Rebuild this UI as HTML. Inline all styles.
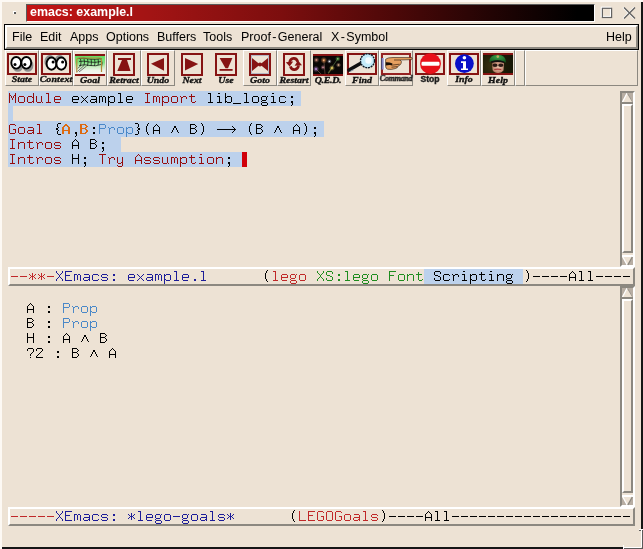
<!DOCTYPE html>
<html><head><meta charset="utf-8">
<style>
html,body{margin:0;padding:0;}
body{width:643px;height:549px;overflow:hidden;position:relative;background:#ede2d4;font-family:"Liberation Sans",sans-serif;}
.a{position:absolute;box-sizing:border-box;}
.t{position:absolute;white-space:pre;will-change:transform;}
.mono{will-change:transform;-webkit-text-stroke:0.2px #ede2d4;font-family:"Liberation Mono",monospace;font-size:15px;line-height:15px;white-space:pre;position:absolute;}
.menu{will-change:transform;position:absolute;font-size:12.5px;color:#000;top:30px;line-height:15px;white-space:pre;}
.lbl{will-change:transform;position:absolute;-webkit-text-stroke:0.35px #111;font-family:"Liberation Serif",serif;font-weight:bold;font-style:italic;font-size:9px;line-height:12px;white-space:nowrap;color:#111;text-align:center;transform:scaleX(1.1);}
.kw{color:#960c0c;}
.hl{background:#bcd1ec;-webkit-text-stroke-color:#bcd1ec;}
svg{position:absolute;overflow:visible;}
</style></head><body>
<div class="a" style="left:0px;top:0px;width:643px;height:2px;background:#fdf9f4"></div>
<div class="a" style="left:0px;top:0px;width:2px;height:549px;background:#fdf9f4"></div>
<div class="a" style="left:641px;top:2px;width:2px;height:527px;background:#151515"></div>
<div class="a" style="left:2px;top:547px;width:621px;height:2px;background:#151515"></div>
<div class="a" style="left:639px;top:529px;width:4px;height:1px;background:#fff"></div>
<div class="a" style="left:639px;top:530px;width:2px;height:1px;background:#5a5a5a"></div>
<div class="a" style="left:641px;top:530px;width:1px;height:17px;background:#fff"></div>
<div class="a" style="left:642px;top:530px;width:1px;height:19px;background:#5a5a5a"></div>
<div class="a" style="left:624px;top:547px;width:17px;height:1px;background:#fff"></div>
<div class="a" style="left:624px;top:548px;width:18px;height:1px;background:#5a5a5a"></div>
<div class="a" style="left:623px;top:545px;width:1px;height:4px;background:#fff"></div>
<div class="a" style="left:13px;top:11px;width:3px;height:3px;border-top:1px solid #fff;border-left:1px solid #fff;background:#5a5a5a"></div>
<div class="a" style="left:26px;top:4px;width:569px;height:18px;border-top:1px solid #5a5a5a;border-left:1px solid #5a5a5a;border-right:1px solid #fff;border-bottom:1px solid #fff;background:linear-gradient(to right,#c41414 0%,#a21414 22%,#7c0e0e 45%,#4c0808 65%,#220404 82%,#000 97%)"></div>
<div class="t" style="left:30px;top:4.3px;font-weight:bold;font-size:12.45px;line-height:17px;color:#fff;">emacs: example.l</div>
<svg style="left:598px;top:4px" width="44" height="18"><rect x="3.4" y="3.3" width="9.2" height="9.2" fill="none" stroke="#fff" stroke-width="1.3"/><rect x="4.4" y="4.3" width="9.2" height="9.2" fill="none" stroke="#626262" stroke-width="1.2"/><path d="M25 3.5 L36 14.5 M36 3.5 L25 14.5" stroke="#fff" stroke-width="1.4"/><path d="M26 3.5 L37 14.5 M37 3.5 L26 14.5" stroke="#626262" stroke-width="1.4"/></svg>
<div class="a" style="left:4px;top:24px;width:635px;height:26px;border:1px solid #000"></div>
<div class="a" style="left:5px;top:25px;width:633px;height:24px;border-top:2px solid #fff;border-left:2px solid #fff;border-right:2px solid #8c8880;border-bottom:2px solid #8c8880"></div>
<div class="menu" style="left:12px">File</div>
<div class="menu" style="left:40px">Edit</div>
<div class="menu" style="left:70px">Apps</div>
<div class="menu" style="left:106px">Options</div>
<div class="menu" style="left:157px">Buffers</div>
<div class="menu" style="left:203px">Tools</div>
<div class="menu" style="left:241px">Proof<span style="margin:0 1.4px">-</span>General</div>
<div class="menu" style="left:331px">X<span style="margin:0 1.4px">-</span>Symbol</div>
<div class="menu" style="left:606px">Help</div>
<div class="a" style="left:5px;top:50px;width:34px;height:36px;border-top:1px solid #fff;border-left:1px solid #fff;border-right:1px solid #8c8880;border-bottom:1px solid #8c8880"></div>
<div class="a" style="left:39px;top:50px;width:34px;height:36px;border-top:1px solid #fff;border-left:1px solid #fff;border-right:1px solid #8c8880;border-bottom:1px solid #8c8880"></div>
<div class="a" style="left:73px;top:50px;width:34px;height:36px;border-top:1px solid #fff;border-left:1px solid #fff;border-right:1px solid #8c8880;border-bottom:1px solid #8c8880"></div>
<div class="a" style="left:107px;top:50px;width:34px;height:36px;border-top:1px solid #fff;border-left:1px solid #fff;border-right:1px solid #8c8880;border-bottom:1px solid #8c8880"></div>
<div class="a" style="left:141px;top:50px;width:34px;height:36px;border-top:1px solid #fff;border-left:1px solid #fff;border-right:1px solid #8c8880;border-bottom:1px solid #8c8880"></div>
<div class="a" style="left:243px;top:50px;width:34px;height:36px;border-top:1px solid #fff;border-left:1px solid #fff;border-right:1px solid #8c8880;border-bottom:1px solid #8c8880"></div>
<div class="a" style="left:277px;top:50px;width:34px;height:36px;border-top:1px solid #fff;border-left:1px solid #fff;border-right:1px solid #8c8880;border-bottom:1px solid #8c8880"></div>
<div class="a" style="left:345px;top:50px;width:34px;height:36px;border-top:1px solid #fff;border-left:1px solid #fff;border-right:1px solid #8c8880;border-bottom:1px solid #8c8880"></div>
<div class="a" style="left:379px;top:50px;width:34px;height:36px;border-top:1px solid #fff;border-left:1px solid #fff;border-right:1px solid #8c8880;border-bottom:1px solid #8c8880"></div>
<div class="a" style="left:447px;top:50px;width:34px;height:36px;border-top:1px solid #fff;border-left:1px solid #fff;border-right:1px solid #8c8880;border-bottom:1px solid #8c8880"></div>
<div class="a" style="left:481px;top:50px;width:34px;height:36px;border-top:1px solid #fff;border-left:1px solid #fff;border-right:1px solid #8c8880;border-bottom:1px solid #8c8880"></div>
<div class="a" style="left:515px;top:50px;width:10px;height:36px;border-top:1px solid #fff;border-left:1px solid #fff;border-right:1px solid #8c8880;border-bottom:1px solid #8c8880"></div>
<div class="a" style="left:525px;top:50px;width:113px;height:36px;border-top:1px solid #fff;border-left:1px solid #fff;border-right:1px solid #8c8880;border-bottom:1px solid #8c8880"></div>
<div class="a" style="left:7px;top:53px;width:30px;height:22px;border:2px solid #861313"></div>
<svg style="left:7px;top:53px" width="30" height="22"><ellipse cx="10.799999999999999" cy="12.4" rx="5.5" ry="6.3999999999999995" fill="#8c8c8c"/><ellipse cx="20.900000000000002" cy="12.4" rx="5.5" ry="6.3999999999999995" fill="#8c8c8c"/><ellipse cx="9.2" cy="9.8" rx="4.9" ry="5.8" fill="#fff" stroke="#000" stroke-width="1.9"/><ellipse cx="19.3" cy="9.8" rx="4.9" ry="5.8" fill="#fff" stroke="#000" stroke-width="1.9"/><circle cx="8" cy="11.6" r="1.5" fill="#000"/><circle cx="17.9" cy="11.6" r="1.5" fill="#000"/></svg>
<div class="lbl" style="left:-8px;width:60px;top:72.6px;">State</div>
<div class="a" style="left:41px;top:53px;width:30px;height:22px;border:2px solid #861313"></div>
<svg style="left:41px;top:53px" width="30" height="22"><ellipse cx="8.9" cy="8.7" rx="5.5" ry="6.699999999999999" fill="#8c8c8c"/><ellipse cx="18.7" cy="8.7" rx="5.5" ry="6.699999999999999" fill="#8c8c8c"/><ellipse cx="10.5" cy="10.6" rx="4.9" ry="6.1" fill="#fff" stroke="#000" stroke-width="1.9"/><ellipse cx="20.3" cy="10.6" rx="4.9" ry="6.1" fill="#fff" stroke="#000" stroke-width="1.9"/><circle cx="12.1" cy="9" r="1.5" fill="#000"/><circle cx="21.6" cy="9" r="1.5" fill="#000"/></svg>
<div class="lbl" style="left:26px;width:60px;top:72.6px;letter-spacing:0.1px">Context</div>
<div class="a" style="left:75px;top:54px;width:30px;height:2px;background:#861313"></div>
<div class="a" style="left:75px;top:56px;width:30px;height:18px;background:linear-gradient(to bottom,#64dc64 0%,#7ee27e 35%,#c8eec0 60%,#eef4ea 80%,#f4f6f2 100%)"></div>
<div class="a" style="left:75px;top:74px;width:30px;height:2px;background:#861313"></div>
<svg style="left:75px;top:54px" width="30" height="22"><path d="M3.5 4.5 Q9 3.5 14 5 Q20 6 26.5 4.5 M4 7.5 Q9 6.5 14 8 Q20 9 26 7.5 M4 11.5 Q10 10 15 11.5 Q21 12.5 26 10.5 M5.5 5 Q6.5 8 5.5 12 M9 4.5 Q10 8 9 11.5 M12.5 5 Q13.5 8 12.5 12 M16 5 Q17 8 16 12 M19.5 5.5 Q20.5 8 19.5 12 M23 5 Q24 8 23 11 M26 5 Q28 9 26.5 13" stroke="#161616" stroke-width="0.75" fill="none"/><path d="M2.5 17.5 L9 11.5 M2.5 14.5 L6 11.5 M4 18 L11.5 12" stroke="#202020" stroke-width="0.6" fill="none"/><path d="M1.8 18.5 L1.8 5.5 Q2.2 4 4 4 L25 4 Q26.5 4 26.5 6 L26.5 18" stroke="#b48a38" stroke-width="1.2" fill="none"/></svg>
<div class="lbl" style="left:60px;width:60px;top:73.6px;">Goal</div>
<div class="a" style="left:113px;top:53px;width:22px;height:23px;border:2px solid #861313"></div>
<svg style="left:113px;top:53px" width="22" height="23"><rect x="5" y="5" width="13" height="2" fill="#861313"/><path d="M9 7 L14 7 L17.5 18 L4.3 18 Z" fill="#861313"/></svg>
<div class="lbl" style="left:94px;width:60px;top:73.6px;">Retract</div>
<div class="a" style="left:147px;top:53px;width:22px;height:23px;border:2px solid #861313"></div>
<svg style="left:147px;top:53px" width="22" height="23"><path d="M4 10.8 L17 4.9 L17 17.8 Z" fill="#861313"/></svg>
<div class="lbl" style="left:128px;width:60px;top:73.6px;">Undo</div>
<div class="a" style="left:181px;top:53px;width:22px;height:23px;border:2px solid #861313"></div>
<svg style="left:181px;top:53px" width="22" height="23"><path d="M4 4.9 L4 17.5 L17.2 11 Z" fill="#861313"/></svg>
<div class="lbl" style="left:162px;width:60px;top:73.6px;">Next</div>
<div class="a" style="left:215px;top:53px;width:22px;height:23px;border:2px solid #861313"></div>
<svg style="left:215px;top:53px" width="22" height="23"><path d="M4.6 4.9 L17.4 4.9 L13 15.2 L10.5 15.2 Z" fill="#861313"/><rect x="4.6" y="16" width="13" height="1.8" fill="#861313"/></svg>
<div class="lbl" style="left:196px;width:60px;top:73.6px;">Use</div>
<div class="a" style="left:249px;top:53px;width:22px;height:23px;border:2px solid #861313"></div>
<svg style="left:249px;top:53px" width="22" height="23"><rect x="2.5" y="2.5" width="17" height="18" fill="none" stroke="#b4b8c4" stroke-width="1"/><path d="M3 5 L11 11.5 L3 18 Z M19 5 L11 11.5 L19 18 Z" fill="#861313"/><circle cx="11" cy="11.4" r="2" fill="#861313"/></svg>
<div class="lbl" style="left:230px;width:60px;top:73.6px;">Goto</div>
<div class="a" style="left:283px;top:53px;width:22px;height:23px;border:2px solid #861313"></div>
<svg style="left:283px;top:53px" width="22" height="23"><path d="M14.8 8.8 A4.3 5.4 0 0 0 6.6 9.5" stroke="#861313" stroke-width="2.7" fill="none"/><path d="M7.4 13.3 A4.3 5.4 0 0 0 15.6 12.4" stroke="#861313" stroke-width="2.7" fill="none"/><path d="M2.8 9.2 L10.2 8.4 L6.6 13.6 Z M11.6 12.8 L19 12.2 L15 7.6 Z" fill="#861313"/></svg>
<div class="lbl" style="left:264px;width:60px;top:73.6px;">Restart</div>
<div class="a" style="left:313px;top:54px;width:30px;height:2px;background:#861313"></div>
<div class="a" style="left:313px;top:56px;width:30px;height:18px;background:#0a0706"></div>
<div class="a" style="left:313px;top:74px;width:30px;height:2px;background:#861313"></div>
<svg style="left:313px;top:54px" width="30" height="22"><defs><radialGradient id="glc08070"><stop offset="0" stop-color="#fff" stop-opacity="1"/><stop offset="0.18" stop-color="#c08070" stop-opacity="0.95"/><stop offset="0.45" stop-color="#c08070" stop-opacity="0.45"/><stop offset="1" stop-color="#c08070" stop-opacity="0"/></radialGradient><radialGradient id="gle89050"><stop offset="0" stop-color="#fff" stop-opacity="1"/><stop offset="0.18" stop-color="#e89050" stop-opacity="0.95"/><stop offset="0.45" stop-color="#e89050" stop-opacity="0.45"/><stop offset="1" stop-color="#e89050" stop-opacity="0"/></radialGradient><radialGradient id="glc8c8d8"><stop offset="0" stop-color="#fff" stop-opacity="1"/><stop offset="0.18" stop-color="#c8c8d8" stop-opacity="0.95"/><stop offset="0.45" stop-color="#c8c8d8" stop-opacity="0.45"/><stop offset="1" stop-color="#c8c8d8" stop-opacity="0"/></radialGradient><radialGradient id="gl60b050"><stop offset="0" stop-color="#fff" stop-opacity="1"/><stop offset="0.18" stop-color="#60b050" stop-opacity="0.95"/><stop offset="0.45" stop-color="#60b050" stop-opacity="0.45"/><stop offset="1" stop-color="#60b050" stop-opacity="0"/></radialGradient><radialGradient id="glc8a080"><stop offset="0" stop-color="#fff" stop-opacity="1"/><stop offset="0.18" stop-color="#c8a080" stop-opacity="0.95"/><stop offset="0.45" stop-color="#c8a080" stop-opacity="0.45"/><stop offset="1" stop-color="#c8a080" stop-opacity="0"/></radialGradient><radialGradient id="glb080d0"><stop offset="0" stop-color="#fff" stop-opacity="1"/><stop offset="0.18" stop-color="#b080d0" stop-opacity="0.95"/><stop offset="0.45" stop-color="#b080d0" stop-opacity="0.45"/><stop offset="1" stop-color="#b080d0" stop-opacity="0"/></radialGradient><radialGradient id="glc08090"><stop offset="0" stop-color="#fff" stop-opacity="1"/><stop offset="0.18" stop-color="#c08090" stop-opacity="0.95"/><stop offset="0.45" stop-color="#c08090" stop-opacity="0.45"/><stop offset="1" stop-color="#c08090" stop-opacity="0"/></radialGradient><radialGradient id="gle8d060"><stop offset="0" stop-color="#fff" stop-opacity="1"/><stop offset="0.18" stop-color="#e8d060" stop-opacity="0.95"/><stop offset="0.45" stop-color="#e8d060" stop-opacity="0.45"/><stop offset="1" stop-color="#e8d060" stop-opacity="0"/></radialGradient></defs><path d="M10.8 6 L12 20 M3 15 L8 20" stroke="#806050" stroke-width="1" opacity="0.6"/><path d="M24.8 4.8 L15 19" stroke="#608050" stroke-width="1" opacity="0.6"/><path d="M19 14 L15.5 19.5" stroke="#d0c060" stroke-width="0.9" opacity="0.5"/><circle cx="3.4" cy="6" r="3" fill="url(#glc08070)"/><circle cx="10.8" cy="6.2" r="3.4" fill="url(#gle89050)"/><circle cx="16.4" cy="7.4" r="2.4" fill="url(#glc8c8d8)"/><circle cx="24.8" cy="4.8" r="2.8" fill="url(#gl60b050)"/><circle cx="25.5" cy="11" r="2.6" fill="url(#glc8a080)"/><circle cx="3" cy="15" r="3.2" fill="url(#glb080d0)"/><circle cx="10" cy="13.4" r="2.6" fill="url(#glc08090)"/><circle cx="19" cy="14" r="3" fill="url(#gle8d060)"/></svg>
<div class="lbl" style="left:298px;width:60px;top:73.6px;letter-spacing:-0.25px">Q.E.D.</div>
<div class="a" style="left:347px;top:53px;width:30px;height:22px;border:2px solid #861313"></div>
<svg style="left:347px;top:53px" width="30" height="22"><path d="M2 17 L12.5 11" stroke="#101010" stroke-width="3.6" stroke-linecap="round"/><path d="M3 18.5 L7 16.5" stroke="#8090a0" stroke-width="1" /><circle cx="20.5" cy="7.8" r="7" fill="#c4ecfa" stroke="#0e1a28" stroke-width="1.4" stroke-dasharray="2 0.8"/><circle cx="21.5" cy="7.5" r="3.2" fill="#f4fcff"/></svg>
<div class="lbl" style="left:332px;width:60px;top:73.6px;">Find</div>
<div class="a" style="left:381px;top:53px;width:30px;height:22px;border:2px solid #962222"></div>
<svg style="left:381px;top:53px" width="32" height="22"><rect x="0" y="5" width="2.8" height="11.5" fill="#8a88c6"/><path d="M0.4 5 V16.5" stroke="#30304a" stroke-width="0.8"/><rect x="2.8" y="5" width="1.8" height="11.5" fill="#f6f6f6"/><path d="M4.6 6.2 Q7 4.4 12 4.5 L30.8 4.6 Q31.6 5.6 30.6 6.6 L19 7 Q21.2 8.2 20.2 10.2 Q19.6 12.2 17.2 13 Q16.8 15 14.2 15.6 Q10 17 6.6 16.2 Q4.6 15.4 4.6 13.4 Z" fill="#e6a060" stroke="#2a1a10" stroke-width="0.6"/><path d="M4.8 9.2 Q8.5 9 11.5 10.6 L11 12.2 Q8 11.6 4.8 12.4 Z" fill="#1a1008"/><path d="M10.5 12.2 L18.5 11.2 M10.5 14.2 L16.5 13.6 M13 7 L19 7" stroke="#3a2010" stroke-width="0.7" fill="none"/></svg>
<div class="lbl" style="left:366px;width:60px;top:72.6px;transform:scaleX(0.95);font-size:8.4px;color:#2a2a2a;letter-spacing:-0.2px">Command</div>
<div class="a" style="left:415px;top:53px;width:30px;height:22px;border:2px solid #861313"></div>
<svg style="left:415px;top:53px" width="30" height="22"><circle cx="15.5" cy="10.7" r="10.4" fill="#e8101a"/><rect x="6.5" y="8.7" width="18" height="4" rx="1.2" fill="#fff"/></svg>
<div class="t" style="left:400px;width:60px;text-align:center;top:72.6px;font-family:Liberation Sans,sans-serif;font-weight:bold;font-size:8.6px;line-height:12px;color:#1e1e1e;-webkit-text-stroke:0.45px #1e1e1e">Stop</div>
<div class="a" style="left:449px;top:53px;width:30px;height:22px;border:2px solid #861313"></div>
<svg style="left:449px;top:53px" width="30" height="22"><circle cx="15.4" cy="10.6" r="9.4" fill="#0a10c8"/><circle cx="15.4" cy="4.8" r="1.8" fill="#fff"/><path d="M12 8.3 L17 8.3 L17 15.5 L19 15.5 L19 17 L12 17 L12 15.5 L14 15.5 L14 10 L12 10 Z" fill="#fff"/></svg>
<div class="lbl" style="left:434px;width:60px;top:72.6px;">Info</div>
<div class="a" style="left:483px;top:53px;width:30px;height:2px;background:#861313"></div>
<div class="a" style="left:483px;top:55px;width:30px;height:18px;background:radial-gradient(circle at 30% 60%,#3a3010 0%,#1a1a06 60%,#141404 100%)"></div>
<div class="a" style="left:483px;top:73px;width:30px;height:2px;background:#861313"></div>
<svg style="left:483px;top:53px" width="30" height="22"><defs><radialGradient id="skin" cx="0.55" cy="0.45" r="0.7"><stop offset="0" stop-color="#e8c0a8"/><stop offset="0.7" stop-color="#c08870"/><stop offset="1" stop-color="#6a4030"/></radialGradient><radialGradient id="cap" cx="0.5" cy="0.3" r="0.7"><stop offset="0" stop-color="#3aa048"/><stop offset="1" stop-color="#145a20"/></radialGradient></defs><path d="M9 9 L21 9 L20.5 17.5 Q18 20.5 14.5 20 Q10.5 19.5 9.5 17 Z" fill="url(#skin)"/><path d="M6.5 9 Q6 2 14.5 1.8 Q23 2 23 9.5 Q18 7.5 14.5 7.5 Q10 7.5 6.5 9 Z" fill="url(#cap)"/><path d="M8 8.5 Q14.5 6 21.5 8.8 L21 10 Q14.5 8 8.5 10 Z" fill="#101010"/><ellipse cx="12" cy="12.3" rx="2.6" ry="1.8" fill="#2a1a14"/><ellipse cx="17.8" cy="12.3" rx="2.6" ry="1.8" fill="#2a1a14"/><path d="M11 16 Q14.5 15 18.5 16 L18 17 Q14.5 16.3 11.5 17 Z" fill="#a83838"/><circle cx="14.8" cy="3.6" r="1.3" fill="#b8b060"/></svg>
<div class="lbl" style="left:468px;width:60px;top:73.6px;">Help</div>
<div class="a" style="left:8px;top:91px;width:293px;height:15px;background:#bcd1ec"></div>
<div class="a" style="left:8px;top:106px;width:5px;height:15px;background:#bcd1ec"></div>
<div class="a" style="left:8px;top:121px;width:316px;height:16px;background:#bcd1ec"></div>
<div class="a" style="left:8px;top:137px;width:113px;height:15px;background:#bcd1ec"></div>
<div class="a" style="left:8px;top:152px;width:234px;height:15px;background:#bcd1ec"></div>
<svg style="left:8px;top:91px" width="288" height="15" shape-rendering="crispEdges"><path fill="#960c0c" d="M1 2h1v1h-1zM7 2h1v1h-1zM1 3h1v1h-1zM7 3h1v1h-1zM1 4h2v1h-2zM6 4h2v1h-2zM1 5h1v1h-1zM3 5h1v1h-1zM5 5h1v1h-1zM7 5h1v1h-1zM1 6h1v1h-1zM3 6h1v1h-1zM5 6h1v1h-1zM7 6h1v1h-1zM1 7h1v1h-1zM4 7h1v1h-1zM7 7h1v1h-1zM1 8h1v1h-1zM4 8h1v1h-1zM7 8h1v1h-1zM1 9h1v1h-1zM7 9h1v1h-1zM1 10h1v1h-1zM7 10h1v1h-1zM1 11h1v1h-1zM7 11h1v1h-1zM11 5h5v1h-5zM10 6h1v1h-1zM16 6h1v1h-1zM10 7h1v1h-1zM16 7h1v1h-1zM10 8h1v1h-1zM16 8h1v1h-1zM10 9h1v1h-1zM16 9h1v1h-1zM10 10h1v1h-1zM16 10h1v1h-1zM11 11h5v1h-5zM25 2h1v1h-1zM25 3h1v1h-1zM25 4h1v1h-1zM20 5h4v1h-4zM25 5h1v1h-1zM19 6h1v1h-1zM24 6h2v1h-2zM19 7h1v1h-1zM25 7h1v1h-1zM19 8h1v1h-1zM25 8h1v1h-1zM19 9h1v1h-1zM25 9h1v1h-1zM19 10h1v1h-1zM24 10h2v1h-2zM20 11h4v1h-4zM25 11h1v1h-1zM28 5h1v1h-1zM33 5h1v1h-1zM28 6h1v1h-1zM33 6h1v1h-1zM28 7h1v1h-1zM33 7h1v1h-1zM28 8h1v1h-1zM33 8h1v1h-1zM28 9h1v1h-1zM33 9h1v1h-1zM28 10h1v1h-1zM33 10h1v1h-1zM29 11h4v1h-4zM34 11h1v1h-1zM38 2h3v1h-3zM40 3h1v1h-1zM40 4h1v1h-1zM40 5h1v1h-1zM40 6h1v1h-1zM40 7h1v1h-1zM40 8h1v1h-1zM40 9h1v1h-1zM40 10h1v1h-1zM38 11h5v1h-5zM47 5h5v1h-5zM46 6h1v1h-1zM52 6h1v1h-1zM46 7h1v1h-1zM52 7h1v1h-1zM46 8h7v1h-7zM46 9h1v1h-1zM46 10h1v1h-1zM47 11h5v1h-5zM137 2h5v1h-5zM139 3h1v1h-1zM139 4h1v1h-1zM139 5h1v1h-1zM139 6h1v1h-1zM139 7h1v1h-1zM139 8h1v1h-1zM139 9h1v1h-1zM139 10h1v1h-1zM137 11h5v1h-5zM145 5h3v1h-3zM149 5h2v1h-2zM145 6h1v1h-1zM148 6h1v1h-1zM151 6h1v1h-1zM145 7h1v1h-1zM148 7h1v1h-1zM151 7h1v1h-1zM145 8h1v1h-1zM148 8h1v1h-1zM151 8h1v1h-1zM145 9h1v1h-1zM148 9h1v1h-1zM151 9h1v1h-1zM145 10h1v1h-1zM148 10h1v1h-1zM151 10h1v1h-1zM145 11h1v1h-1zM151 11h1v1h-1zM154 5h1v1h-1zM156 5h4v1h-4zM154 6h2v1h-2zM160 6h1v1h-1zM154 7h1v1h-1zM160 7h1v1h-1zM154 8h1v1h-1zM160 8h1v1h-1zM154 9h1v1h-1zM160 9h1v1h-1zM154 10h2v1h-2zM160 10h1v1h-1zM154 11h1v1h-1zM156 11h4v1h-4zM154 12h1v1h-1zM154 13h1v1h-1zM154 14h1v1h-1zM164 5h5v1h-5zM163 6h1v1h-1zM169 6h1v1h-1zM163 7h1v1h-1zM169 7h1v1h-1zM163 8h1v1h-1zM169 8h1v1h-1zM163 9h1v1h-1zM169 9h1v1h-1zM163 10h1v1h-1zM169 10h1v1h-1zM164 11h5v1h-5zM172 5h1v1h-1zM175 5h3v1h-3zM173 6h2v1h-2zM178 6h1v1h-1zM173 7h1v1h-1zM178 7h1v1h-1zM173 8h1v1h-1zM173 9h1v1h-1zM173 10h1v1h-1zM173 11h1v1h-1zM183 3h1v1h-1zM183 4h1v1h-1zM181 5h6v1h-6zM183 6h1v1h-1zM183 7h1v1h-1zM183 8h1v1h-1zM183 9h1v1h-1zM183 10h1v1h-1zM187 10h1v1h-1zM184 11h3v1h-3z"/><path fill="#000" d="M65 5h5v1h-5zM64 6h1v1h-1zM70 6h1v1h-1zM64 7h1v1h-1zM70 7h1v1h-1zM64 8h7v1h-7zM64 9h1v1h-1zM64 10h1v1h-1zM65 11h5v1h-5zM73 5h1v1h-1zM79 5h1v1h-1zM74 6h1v1h-1zM78 6h1v1h-1zM75 7h1v1h-1zM77 7h1v1h-1zM76 8h1v1h-1zM75 9h1v1h-1zM77 9h1v1h-1zM74 10h1v1h-1zM78 10h1v1h-1zM73 11h1v1h-1zM79 11h1v1h-1zM83 5h5v1h-5zM88 6h1v1h-1zM88 7h1v1h-1zM83 8h6v1h-6zM82 9h1v1h-1zM88 9h1v1h-1zM82 10h1v1h-1zM87 10h2v1h-2zM83 11h4v1h-4zM88 11h1v1h-1zM91 5h3v1h-3zM95 5h2v1h-2zM91 6h1v1h-1zM94 6h1v1h-1zM97 6h1v1h-1zM91 7h1v1h-1zM94 7h1v1h-1zM97 7h1v1h-1zM91 8h1v1h-1zM94 8h1v1h-1zM97 8h1v1h-1zM91 9h1v1h-1zM94 9h1v1h-1zM97 9h1v1h-1zM91 10h1v1h-1zM94 10h1v1h-1zM97 10h1v1h-1zM91 11h1v1h-1zM97 11h1v1h-1zM100 5h1v1h-1zM102 5h4v1h-4zM100 6h2v1h-2zM106 6h1v1h-1zM100 7h1v1h-1zM106 7h1v1h-1zM100 8h1v1h-1zM106 8h1v1h-1zM100 9h1v1h-1zM106 9h1v1h-1zM100 10h2v1h-2zM106 10h1v1h-1zM100 11h1v1h-1zM102 11h4v1h-4zM100 12h1v1h-1zM100 13h1v1h-1zM100 14h1v1h-1zM110 2h3v1h-3zM112 3h1v1h-1zM112 4h1v1h-1zM112 5h1v1h-1zM112 6h1v1h-1zM112 7h1v1h-1zM112 8h1v1h-1zM112 9h1v1h-1zM112 10h1v1h-1zM110 11h5v1h-5zM119 5h5v1h-5zM118 6h1v1h-1zM124 6h1v1h-1zM118 7h1v1h-1zM124 7h1v1h-1zM118 8h7v1h-7zM118 9h1v1h-1zM118 10h1v1h-1zM119 11h5v1h-5zM200 2h3v1h-3zM202 3h1v1h-1zM202 4h1v1h-1zM202 5h1v1h-1zM202 6h1v1h-1zM202 7h1v1h-1zM202 8h1v1h-1zM202 9h1v1h-1zM202 10h1v1h-1zM200 11h5v1h-5zM210 2h2v1h-2zM209 5h3v1h-3zM211 6h1v1h-1zM211 7h1v1h-1zM211 8h1v1h-1zM211 9h1v1h-1zM211 10h1v1h-1zM209 11h5v1h-5zM217 2h1v1h-1zM217 3h1v1h-1zM217 4h1v1h-1zM217 5h1v1h-1zM219 5h4v1h-4zM217 6h2v1h-2zM223 6h1v1h-1zM217 7h1v1h-1zM223 7h1v1h-1zM217 8h1v1h-1zM223 8h1v1h-1zM217 9h1v1h-1zM223 9h1v1h-1zM217 10h2v1h-2zM223 10h1v1h-1zM217 11h1v1h-1zM219 11h4v1h-4zM225 12h8v1h-8zM236 2h3v1h-3zM238 3h1v1h-1zM238 4h1v1h-1zM238 5h1v1h-1zM238 6h1v1h-1zM238 7h1v1h-1zM238 8h1v1h-1zM238 9h1v1h-1zM238 10h1v1h-1zM236 11h5v1h-5zM245 5h5v1h-5zM244 6h1v1h-1zM250 6h1v1h-1zM244 7h1v1h-1zM250 7h1v1h-1zM244 8h1v1h-1zM250 8h1v1h-1zM244 9h1v1h-1zM250 9h1v1h-1zM244 10h1v1h-1zM250 10h1v1h-1zM245 11h5v1h-5zM254 5h4v1h-4zM259 5h1v1h-1zM253 6h1v1h-1zM258 6h1v1h-1zM253 7h1v1h-1zM258 7h1v1h-1zM253 8h1v1h-1zM258 8h1v1h-1zM254 9h4v1h-4zM253 10h1v1h-1zM254 11h5v1h-5zM253 12h1v1h-1zM259 12h1v1h-1zM253 13h1v1h-1zM259 13h1v1h-1zM254 14h5v1h-5zM264 2h2v1h-2zM263 5h3v1h-3zM265 6h1v1h-1zM265 7h1v1h-1zM265 8h1v1h-1zM265 9h1v1h-1zM265 10h1v1h-1zM263 11h5v1h-5zM272 5h5v1h-5zM271 6h1v1h-1zM277 6h1v1h-1zM271 7h1v1h-1zM271 8h1v1h-1zM271 9h1v1h-1zM271 10h1v1h-1zM277 10h1v1h-1zM272 11h5v1h-5zM283 5h2v1h-2zM283 6h2v1h-2zM283 10h2v1h-2zM283 11h2v1h-2zM284 12h1v1h-1zM284 13h1v1h-1zM283 14h1v1h-1z"/></svg>
<svg style="left:8px;top:122px" width="311" height="15" shape-rendering="crispEdges"><path fill="#960c0c" d="M2 2h5v1h-5zM1 3h1v1h-1zM7 3h1v1h-1zM1 4h1v1h-1zM1 5h1v1h-1zM1 6h1v1h-1zM1 7h1v1h-1zM5 7h3v1h-3zM1 8h1v1h-1zM7 8h1v1h-1zM1 9h1v1h-1zM7 9h1v1h-1zM1 10h1v1h-1zM7 10h1v1h-1zM2 11h5v1h-5zM11 5h5v1h-5zM10 6h1v1h-1zM16 6h1v1h-1zM10 7h1v1h-1zM16 7h1v1h-1zM10 8h1v1h-1zM16 8h1v1h-1zM10 9h1v1h-1zM16 9h1v1h-1zM10 10h1v1h-1zM16 10h1v1h-1zM11 11h5v1h-5zM20 5h5v1h-5zM25 6h1v1h-1zM25 7h1v1h-1zM20 8h6v1h-6zM19 9h1v1h-1zM25 9h1v1h-1zM19 10h1v1h-1zM24 10h2v1h-2zM20 11h4v1h-4zM25 11h1v1h-1zM29 2h3v1h-3zM31 3h1v1h-1zM31 4h1v1h-1zM31 5h1v1h-1zM31 6h1v1h-1zM31 7h1v1h-1zM31 8h1v1h-1zM31 9h1v1h-1zM31 10h1v1h-1zM29 11h5v1h-5z"/><path fill="#000" d="M50 1h3v1h-3zM49 2h1v1h-1zM49 3h1v1h-1zM49 4h1v1h-1zM50 5h1v1h-1zM48 6h2v1h-2zM48 7h2v1h-2zM50 8h1v1h-1zM49 9h1v1h-1zM49 10h1v1h-1zM49 11h1v1h-1zM50 12h3v1h-3zM67 10h2v1h-2zM67 11h2v1h-2zM68 12h1v1h-1zM68 13h1v1h-1zM67 14h1v1h-1zM85 5h2v1h-2zM85 6h2v1h-2zM85 10h2v1h-2zM85 11h2v1h-2zM127 1h3v1h-3zM130 2h1v1h-1zM130 3h1v1h-1zM130 4h1v1h-1zM129 5h1v1h-1zM130 6h2v1h-2zM130 7h2v1h-2zM129 8h1v1h-1zM130 9h1v1h-1zM130 10h1v1h-1zM130 11h1v1h-1zM127 12h3v1h-3zM140 1h1v1h-1zM139 2h1v1h-1zM139 3h1v1h-1zM138 4h1v1h-1zM138 5h1v1h-1zM138 6h1v1h-1zM138 7h1v1h-1zM138 8h1v1h-1zM138 9h1v1h-1zM139 10h1v1h-1zM139 11h1v1h-1zM140 12h1v1h-1zM148 2h1v1h-1zM147 3h1v1h-1zM149 3h1v1h-1zM146 4h1v1h-1zM150 4h1v1h-1zM145 5h1v1h-1zM151 5h1v1h-1zM145 6h1v1h-1zM151 6h1v1h-1zM145 7h1v1h-1zM151 7h1v1h-1zM145 8h7v1h-7zM145 9h1v1h-1zM151 9h1v1h-1zM145 10h1v1h-1zM151 10h1v1h-1zM145 11h1v1h-1zM151 11h1v1h-1zM166 4h2v1h-2zM166 5h2v1h-2zM165 6h1v1h-1zM168 6h1v1h-1zM165 7h1v1h-1zM168 7h1v1h-1zM164 8h1v1h-1zM169 8h1v1h-1zM164 9h1v1h-1zM169 9h1v1h-1zM163 10h1v1h-1zM170 10h1v1h-1zM182 2h5v1h-5zM182 3h1v1h-1zM187 3h1v1h-1zM182 4h1v1h-1zM188 4h1v1h-1zM182 5h1v1h-1zM187 5h1v1h-1zM182 6h5v1h-5zM182 7h1v1h-1zM187 7h1v1h-1zM182 8h1v1h-1zM188 8h1v1h-1zM182 9h1v1h-1zM188 9h1v1h-1zM182 10h1v1h-1zM187 10h1v1h-1zM182 11h5v1h-5zM193 1h1v1h-1zM194 2h1v1h-1zM194 3h1v1h-1zM195 4h1v1h-1zM195 5h1v1h-1zM195 6h1v1h-1zM195 7h1v1h-1zM195 8h1v1h-1zM195 9h1v1h-1zM194 10h1v1h-1zM194 11h1v1h-1zM193 12h1v1h-1zM224 4h1v1h-1zM225 5h1v1h-1zM226 6h1v1h-1zM209 7h19v1h-19zM226 8h1v1h-1zM225 9h1v1h-1zM224 10h1v1h-1zM243 1h1v1h-1zM242 2h1v1h-1zM242 3h1v1h-1zM241 4h1v1h-1zM241 5h1v1h-1zM241 6h1v1h-1zM241 7h1v1h-1zM241 8h1v1h-1zM241 9h1v1h-1zM242 10h1v1h-1zM242 11h1v1h-1zM243 12h1v1h-1zM248 2h5v1h-5zM248 3h1v1h-1zM253 3h1v1h-1zM248 4h1v1h-1zM254 4h1v1h-1zM248 5h1v1h-1zM253 5h1v1h-1zM248 6h5v1h-5zM248 7h1v1h-1zM253 7h1v1h-1zM248 8h1v1h-1zM254 8h1v1h-1zM248 9h1v1h-1zM254 9h1v1h-1zM248 10h1v1h-1zM253 10h1v1h-1zM248 11h5v1h-5zM269 4h2v1h-2zM269 5h2v1h-2zM268 6h1v1h-1zM271 6h1v1h-1zM268 7h1v1h-1zM271 7h1v1h-1zM267 8h1v1h-1zM272 8h1v1h-1zM267 9h1v1h-1zM272 9h1v1h-1zM266 10h1v1h-1zM273 10h1v1h-1zM288 2h1v1h-1zM287 3h1v1h-1zM289 3h1v1h-1zM286 4h1v1h-1zM290 4h1v1h-1zM285 5h1v1h-1zM291 5h1v1h-1zM285 6h1v1h-1zM291 6h1v1h-1zM285 7h1v1h-1zM291 7h1v1h-1zM285 8h7v1h-7zM285 9h1v1h-1zM291 9h1v1h-1zM285 10h1v1h-1zM291 10h1v1h-1zM285 11h1v1h-1zM291 11h1v1h-1zM296 1h1v1h-1zM297 2h1v1h-1zM297 3h1v1h-1zM298 4h1v1h-1zM298 5h1v1h-1zM298 6h1v1h-1zM298 7h1v1h-1zM298 8h1v1h-1zM298 9h1v1h-1zM297 10h1v1h-1zM297 11h1v1h-1zM296 12h1v1h-1zM306 5h2v1h-2zM306 6h2v1h-2zM306 10h2v1h-2zM306 11h2v1h-2zM307 12h1v1h-1zM307 13h1v1h-1zM306 14h1v1h-1z"/><path fill="#dd6a10" d="M57 2h2v1h-2zM56 3h4v1h-4zM55 4h2v1h-2zM59 4h2v1h-2zM54 5h2v1h-2zM60 5h2v1h-2zM54 6h2v1h-2zM60 6h2v1h-2zM54 7h2v1h-2zM60 7h2v1h-2zM54 8h8v1h-8zM54 9h2v1h-2zM60 9h2v1h-2zM54 10h2v1h-2zM60 10h2v1h-2zM54 11h2v1h-2zM60 11h2v1h-2zM72 2h6v1h-6zM72 3h2v1h-2zM77 3h2v1h-2zM72 4h2v1h-2zM78 4h2v1h-2zM72 5h2v1h-2zM77 5h2v1h-2zM72 6h6v1h-6zM72 7h2v1h-2zM77 7h2v1h-2zM72 8h2v1h-2zM78 8h2v1h-2zM72 9h2v1h-2zM78 9h2v1h-2zM72 10h2v1h-2zM77 10h2v1h-2zM72 11h6v1h-6z"/><path fill="#4a88c8" d="M91 2h6v1h-6zM91 3h1v1h-1zM97 3h1v1h-1zM91 4h1v1h-1zM97 4h1v1h-1zM91 5h1v1h-1zM97 5h1v1h-1zM91 6h6v1h-6zM91 7h1v1h-1zM91 8h1v1h-1zM91 9h1v1h-1zM91 10h1v1h-1zM91 11h1v1h-1zM100 5h1v1h-1zM103 5h3v1h-3zM101 6h2v1h-2zM106 6h1v1h-1zM101 7h1v1h-1zM106 7h1v1h-1zM101 8h1v1h-1zM101 9h1v1h-1zM101 10h1v1h-1zM101 11h1v1h-1zM110 5h5v1h-5zM109 6h1v1h-1zM115 6h1v1h-1zM109 7h1v1h-1zM115 7h1v1h-1zM109 8h1v1h-1zM115 8h1v1h-1zM109 9h1v1h-1zM115 9h1v1h-1zM109 10h1v1h-1zM115 10h1v1h-1zM110 11h5v1h-5zM118 5h1v1h-1zM120 5h4v1h-4zM118 6h2v1h-2zM124 6h1v1h-1zM118 7h1v1h-1zM124 7h1v1h-1zM118 8h1v1h-1zM124 8h1v1h-1zM118 9h1v1h-1zM124 9h1v1h-1zM118 10h2v1h-2zM124 10h1v1h-1zM118 11h1v1h-1zM120 11h4v1h-4zM118 12h1v1h-1zM118 13h1v1h-1zM118 14h1v1h-1z"/></svg>
<svg style="left:8px;top:137px" width="99" height="15" shape-rendering="crispEdges"><path fill="#960c0c" d="M2 2h5v1h-5zM4 3h1v1h-1zM4 4h1v1h-1zM4 5h1v1h-1zM4 6h1v1h-1zM4 7h1v1h-1zM4 8h1v1h-1zM4 9h1v1h-1zM4 10h1v1h-1zM2 11h5v1h-5zM10 5h1v1h-1zM12 5h4v1h-4zM10 6h2v1h-2zM16 6h1v1h-1zM10 7h1v1h-1zM16 7h1v1h-1zM10 8h1v1h-1zM16 8h1v1h-1zM10 9h1v1h-1zM16 9h1v1h-1zM10 10h1v1h-1zM16 10h1v1h-1zM10 11h1v1h-1zM16 11h1v1h-1zM21 3h1v1h-1zM21 4h1v1h-1zM19 5h6v1h-6zM21 6h1v1h-1zM21 7h1v1h-1zM21 8h1v1h-1zM21 9h1v1h-1zM21 10h1v1h-1zM25 10h1v1h-1zM22 11h3v1h-3zM28 5h1v1h-1zM31 5h3v1h-3zM29 6h2v1h-2zM34 6h1v1h-1zM29 7h1v1h-1zM34 7h1v1h-1zM29 8h1v1h-1zM29 9h1v1h-1zM29 10h1v1h-1zM29 11h1v1h-1zM38 5h5v1h-5zM37 6h1v1h-1zM43 6h1v1h-1zM37 7h1v1h-1zM43 7h1v1h-1zM37 8h1v1h-1zM43 8h1v1h-1zM37 9h1v1h-1zM43 9h1v1h-1zM37 10h1v1h-1zM43 10h1v1h-1zM38 11h5v1h-5zM47 5h5v1h-5zM46 6h1v1h-1zM52 6h1v1h-1zM46 7h1v1h-1zM47 8h5v1h-5zM52 9h1v1h-1zM46 10h1v1h-1zM52 10h1v1h-1zM47 11h5v1h-5z"/><path fill="#000" d="M67 2h1v1h-1zM66 3h1v1h-1zM68 3h1v1h-1zM65 4h1v1h-1zM69 4h1v1h-1zM64 5h1v1h-1zM70 5h1v1h-1zM64 6h1v1h-1zM70 6h1v1h-1zM64 7h1v1h-1zM70 7h1v1h-1zM64 8h7v1h-7zM64 9h1v1h-1zM70 9h1v1h-1zM64 10h1v1h-1zM70 10h1v1h-1zM64 11h1v1h-1zM70 11h1v1h-1zM82 2h5v1h-5zM82 3h1v1h-1zM87 3h1v1h-1zM82 4h1v1h-1zM88 4h1v1h-1zM82 5h1v1h-1zM87 5h1v1h-1zM82 6h5v1h-5zM82 7h1v1h-1zM87 7h1v1h-1zM82 8h1v1h-1zM88 8h1v1h-1zM82 9h1v1h-1zM88 9h1v1h-1zM82 10h1v1h-1zM87 10h1v1h-1zM82 11h5v1h-5zM94 5h2v1h-2zM94 6h2v1h-2zM94 10h2v1h-2zM94 11h2v1h-2zM95 12h1v1h-1zM95 13h1v1h-1zM94 14h1v1h-1z"/></svg>
<svg style="left:8px;top:152px" width="225" height="15" shape-rendering="crispEdges"><path fill="#960c0c" d="M2 2h5v1h-5zM4 3h1v1h-1zM4 4h1v1h-1zM4 5h1v1h-1zM4 6h1v1h-1zM4 7h1v1h-1zM4 8h1v1h-1zM4 9h1v1h-1zM4 10h1v1h-1zM2 11h5v1h-5zM10 5h1v1h-1zM12 5h4v1h-4zM10 6h2v1h-2zM16 6h1v1h-1zM10 7h1v1h-1zM16 7h1v1h-1zM10 8h1v1h-1zM16 8h1v1h-1zM10 9h1v1h-1zM16 9h1v1h-1zM10 10h1v1h-1zM16 10h1v1h-1zM10 11h1v1h-1zM16 11h1v1h-1zM21 3h1v1h-1zM21 4h1v1h-1zM19 5h6v1h-6zM21 6h1v1h-1zM21 7h1v1h-1zM21 8h1v1h-1zM21 9h1v1h-1zM21 10h1v1h-1zM25 10h1v1h-1zM22 11h3v1h-3zM28 5h1v1h-1zM31 5h3v1h-3zM29 6h2v1h-2zM34 6h1v1h-1zM29 7h1v1h-1zM34 7h1v1h-1zM29 8h1v1h-1zM29 9h1v1h-1zM29 10h1v1h-1zM29 11h1v1h-1zM38 5h5v1h-5zM37 6h1v1h-1zM43 6h1v1h-1zM37 7h1v1h-1zM43 7h1v1h-1zM37 8h1v1h-1zM43 8h1v1h-1zM37 9h1v1h-1zM43 9h1v1h-1zM37 10h1v1h-1zM43 10h1v1h-1zM38 11h5v1h-5zM47 5h5v1h-5zM46 6h1v1h-1zM52 6h1v1h-1zM46 7h1v1h-1zM47 8h5v1h-5zM52 9h1v1h-1zM46 10h1v1h-1zM52 10h1v1h-1zM47 11h5v1h-5zM91 2h7v1h-7zM94 3h1v1h-1zM94 4h1v1h-1zM94 5h1v1h-1zM94 6h1v1h-1zM94 7h1v1h-1zM94 8h1v1h-1zM94 9h1v1h-1zM94 10h1v1h-1zM94 11h1v1h-1zM100 5h1v1h-1zM103 5h3v1h-3zM101 6h2v1h-2zM106 6h1v1h-1zM101 7h1v1h-1zM106 7h1v1h-1zM101 8h1v1h-1zM101 9h1v1h-1zM101 10h1v1h-1zM101 11h1v1h-1zM109 5h1v1h-1zM114 5h1v1h-1zM109 6h1v1h-1zM114 6h1v1h-1zM109 7h1v1h-1zM114 7h1v1h-1zM109 8h1v1h-1zM114 8h1v1h-1zM109 9h1v1h-1zM114 9h1v1h-1zM109 10h1v1h-1zM113 10h2v1h-2zM110 11h3v1h-3zM114 11h1v1h-1zM114 12h1v1h-1zM109 13h1v1h-1zM114 13h1v1h-1zM110 14h4v1h-4zM130 2h1v1h-1zM129 3h1v1h-1zM131 3h1v1h-1zM128 4h1v1h-1zM132 4h1v1h-1zM127 5h1v1h-1zM133 5h1v1h-1zM127 6h1v1h-1zM133 6h1v1h-1zM127 7h1v1h-1zM133 7h1v1h-1zM127 8h7v1h-7zM127 9h1v1h-1zM133 9h1v1h-1zM127 10h1v1h-1zM133 10h1v1h-1zM127 11h1v1h-1zM133 11h1v1h-1zM137 5h5v1h-5zM136 6h1v1h-1zM142 6h1v1h-1zM136 7h1v1h-1zM137 8h5v1h-5zM142 9h1v1h-1zM136 10h1v1h-1zM142 10h1v1h-1zM137 11h5v1h-5zM146 5h5v1h-5zM145 6h1v1h-1zM151 6h1v1h-1zM145 7h1v1h-1zM146 8h5v1h-5zM151 9h1v1h-1zM145 10h1v1h-1zM151 10h1v1h-1zM146 11h5v1h-5zM154 5h1v1h-1zM159 5h1v1h-1zM154 6h1v1h-1zM159 6h1v1h-1zM154 7h1v1h-1zM159 7h1v1h-1zM154 8h1v1h-1zM159 8h1v1h-1zM154 9h1v1h-1zM159 9h1v1h-1zM154 10h1v1h-1zM159 10h1v1h-1zM155 11h4v1h-4zM160 11h1v1h-1zM163 5h3v1h-3zM167 5h2v1h-2zM163 6h1v1h-1zM166 6h1v1h-1zM169 6h1v1h-1zM163 7h1v1h-1zM166 7h1v1h-1zM169 7h1v1h-1zM163 8h1v1h-1zM166 8h1v1h-1zM169 8h1v1h-1zM163 9h1v1h-1zM166 9h1v1h-1zM169 9h1v1h-1zM163 10h1v1h-1zM166 10h1v1h-1zM169 10h1v1h-1zM163 11h1v1h-1zM169 11h1v1h-1zM172 5h1v1h-1zM174 5h4v1h-4zM172 6h2v1h-2zM178 6h1v1h-1zM172 7h1v1h-1zM178 7h1v1h-1zM172 8h1v1h-1zM178 8h1v1h-1zM172 9h1v1h-1zM178 9h1v1h-1zM172 10h2v1h-2zM178 10h1v1h-1zM172 11h1v1h-1zM174 11h4v1h-4zM172 12h1v1h-1zM172 13h1v1h-1zM172 14h1v1h-1zM183 3h1v1h-1zM183 4h1v1h-1zM181 5h6v1h-6zM183 6h1v1h-1zM183 7h1v1h-1zM183 8h1v1h-1zM183 9h1v1h-1zM183 10h1v1h-1zM187 10h1v1h-1zM184 11h3v1h-3zM192 2h2v1h-2zM191 5h3v1h-3zM193 6h1v1h-1zM193 7h1v1h-1zM193 8h1v1h-1zM193 9h1v1h-1zM193 10h1v1h-1zM191 11h5v1h-5zM200 5h5v1h-5zM199 6h1v1h-1zM205 6h1v1h-1zM199 7h1v1h-1zM205 7h1v1h-1zM199 8h1v1h-1zM205 8h1v1h-1zM199 9h1v1h-1zM205 9h1v1h-1zM199 10h1v1h-1zM205 10h1v1h-1zM200 11h5v1h-5zM208 5h1v1h-1zM210 5h4v1h-4zM208 6h2v1h-2zM214 6h1v1h-1zM208 7h1v1h-1zM214 7h1v1h-1zM208 8h1v1h-1zM214 8h1v1h-1zM208 9h1v1h-1zM214 9h1v1h-1zM208 10h1v1h-1zM214 10h1v1h-1zM208 11h1v1h-1zM214 11h1v1h-1z"/><path fill="#000" d="M64 2h1v1h-1zM70 2h1v1h-1zM64 3h1v1h-1zM70 3h1v1h-1zM64 4h1v1h-1zM70 4h1v1h-1zM64 5h1v1h-1zM70 5h1v1h-1zM64 6h7v1h-7zM64 7h1v1h-1zM70 7h1v1h-1zM64 8h1v1h-1zM70 8h1v1h-1zM64 9h1v1h-1zM70 9h1v1h-1zM64 10h1v1h-1zM70 10h1v1h-1zM64 11h1v1h-1zM70 11h1v1h-1zM76 5h2v1h-2zM76 6h2v1h-2zM76 10h2v1h-2zM76 11h2v1h-2zM77 12h1v1h-1zM77 13h1v1h-1zM76 14h1v1h-1zM220 5h2v1h-2zM220 6h2v1h-2zM220 10h2v1h-2zM220 11h2v1h-2zM221 12h1v1h-1zM221 13h1v1h-1zM220 14h1v1h-1z"/></svg>
<div class="a" style="left:242px;top:152px;width:5px;height:15px;background:#d0000a"></div>
<div class="a" style="left:620px;top:91px;width:15px;height:176px;border-top:2px solid #8c8880;border-left:2px solid #8c8880;border-right:2px solid #fff;border-bottom:2px solid #fff;background:#ede2d4"></div>
<svg style="left:622px;top:93px" width="11" height="11"><rect x="0" y="0" width="11" height="11" fill="#b8aea3"/><path d="M5 0 L11 9 L0 9 Z" fill="#ede2d4"/><path d="M5 0.3 L0.5 9" stroke="#fff" stroke-width="1.3"/><path d="M5.5 0.5 L10.5 9" stroke="#8c8880" stroke-width="0.8"/><rect x="0" y="9" width="11" height="2" fill="#8c8880"/></svg>
<div class="a" style="left:622px;top:104px;width:11px;height:149px;border-top:2px solid #fff;border-left:2px solid #fff;border-right:2px solid #8c8880;border-bottom:2px solid #8c8880"></div>
<svg style="left:622px;top:255px" width="11" height="10"><rect x="0" y="0" width="11" height="10" fill="#b8aea3"/><path d="M0 1 L11 1 L5.5 10 Z" fill="#ede2d4"/><rect x="0" y="0" width="11" height="2" fill="#fff"/><path d="M0.5 1.5 L5.2 10" stroke="#fff" stroke-width="1.3"/><path d="M10.3 2 L5.8 10" stroke="#8c8880" stroke-width="1.3"/></svg>
<div class="a" style="left:620px;top:286px;width:15px;height:221px;border-top:2px solid #8c8880;border-left:2px solid #8c8880;border-right:2px solid #fff;border-bottom:2px solid #fff;background:#ede2d4"></div>
<svg style="left:622px;top:288px" width="11" height="11"><rect x="0" y="0" width="11" height="11" fill="#b8aea3"/><path d="M5 0 L11 9 L0 9 Z" fill="#ede2d4"/><path d="M5 0.3 L0.5 9" stroke="#fff" stroke-width="1.3"/><path d="M5.5 0.5 L10.5 9" stroke="#8c8880" stroke-width="0.8"/><rect x="0" y="9" width="11" height="2" fill="#8c8880"/></svg>
<div class="a" style="left:622px;top:299px;width:11px;height:194px;border-top:2px solid #fff;border-left:2px solid #fff;border-right:2px solid #8c8880;border-bottom:2px solid #8c8880"></div>
<svg style="left:622px;top:495px" width="11" height="10"><rect x="0" y="0" width="11" height="10" fill="#b8aea3"/><path d="M0 1 L11 1 L5.5 10 Z" fill="#ede2d4"/><rect x="0" y="0" width="11" height="2" fill="#fff"/><path d="M0.5 1.5 L5.2 10" stroke="#fff" stroke-width="1.3"/><path d="M10.3 2 L5.8 10" stroke="#8c8880" stroke-width="1.3"/></svg>
<div class="a" style="left:424px;top:269px;width:99px;height:15px;background:#bcd1ec"></div>
<div class="a" style="left:8px;top:267px;width:627px;height:19px;border-top:2px solid #fff;border-left:2px solid #fff;border-right:2px solid #8c8880;border-bottom:2px solid #8c8880"></div>
<svg style="left:10px;top:269px" width="621" height="15" shape-rendering="crispEdges"><path fill="#c02828" d="M1 7h7v1h-7zM10 7h7v1h-7zM22 4h1v1h-1zM19 5h1v1h-1zM22 5h1v1h-1zM25 5h1v1h-1zM20 6h1v1h-1zM22 6h1v1h-1zM24 6h1v1h-1zM21 7h3v1h-3zM20 8h1v1h-1zM22 8h1v1h-1zM24 8h1v1h-1zM19 9h1v1h-1zM22 9h1v1h-1zM25 9h1v1h-1zM22 10h1v1h-1zM31 4h1v1h-1zM28 5h1v1h-1zM31 5h1v1h-1zM34 5h1v1h-1zM29 6h1v1h-1zM31 6h1v1h-1zM33 6h1v1h-1zM30 7h3v1h-3zM29 8h1v1h-1zM31 8h1v1h-1zM33 8h1v1h-1zM28 9h1v1h-1zM31 9h1v1h-1zM34 9h1v1h-1zM31 10h1v1h-1zM37 7h7v1h-7zM263 2h3v1h-3zM265 3h1v1h-1zM265 4h1v1h-1zM265 5h1v1h-1zM265 6h1v1h-1zM265 7h1v1h-1zM265 8h1v1h-1zM265 9h1v1h-1zM265 10h1v1h-1zM263 11h5v1h-5zM272 5h5v1h-5zM271 6h1v1h-1zM277 6h1v1h-1zM271 7h1v1h-1zM277 7h1v1h-1zM271 8h7v1h-7zM271 9h1v1h-1zM271 10h1v1h-1zM272 11h5v1h-5zM281 5h4v1h-4zM286 5h1v1h-1zM280 6h1v1h-1zM285 6h1v1h-1zM280 7h1v1h-1zM285 7h1v1h-1zM280 8h1v1h-1zM285 8h1v1h-1zM281 9h4v1h-4zM280 10h1v1h-1zM281 11h5v1h-5zM280 12h1v1h-1zM286 12h1v1h-1zM280 13h1v1h-1zM286 13h1v1h-1zM281 14h5v1h-5zM290 5h5v1h-5zM289 6h1v1h-1zM295 6h1v1h-1zM289 7h1v1h-1zM295 7h1v1h-1zM289 8h1v1h-1zM295 8h1v1h-1zM289 9h1v1h-1zM295 9h1v1h-1zM289 10h1v1h-1zM295 10h1v1h-1zM290 11h5v1h-5z"/><path fill="#1c1c98" d="M46 2h1v1h-1zM52 2h1v1h-1zM46 3h1v1h-1zM52 3h1v1h-1zM47 4h1v1h-1zM51 4h1v1h-1zM48 5h1v1h-1zM50 5h1v1h-1zM49 6h1v1h-1zM49 7h1v1h-1zM48 8h1v1h-1zM50 8h1v1h-1zM47 9h1v1h-1zM51 9h1v1h-1zM46 10h1v1h-1zM52 10h1v1h-1zM46 11h1v1h-1zM52 11h1v1h-1zM55 2h7v1h-7zM55 3h1v1h-1zM55 4h1v1h-1zM55 5h1v1h-1zM55 6h5v1h-5zM55 7h1v1h-1zM55 8h1v1h-1zM55 9h1v1h-1zM55 10h1v1h-1zM55 11h7v1h-7zM64 5h3v1h-3zM68 5h2v1h-2zM64 6h1v1h-1zM67 6h1v1h-1zM70 6h1v1h-1zM64 7h1v1h-1zM67 7h1v1h-1zM70 7h1v1h-1zM64 8h1v1h-1zM67 8h1v1h-1zM70 8h1v1h-1zM64 9h1v1h-1zM67 9h1v1h-1zM70 9h1v1h-1zM64 10h1v1h-1zM67 10h1v1h-1zM70 10h1v1h-1zM64 11h1v1h-1zM70 11h1v1h-1zM74 5h5v1h-5zM79 6h1v1h-1zM79 7h1v1h-1zM74 8h6v1h-6zM73 9h1v1h-1zM79 9h1v1h-1zM73 10h1v1h-1zM78 10h2v1h-2zM74 11h4v1h-4zM79 11h1v1h-1zM83 5h5v1h-5zM82 6h1v1h-1zM88 6h1v1h-1zM82 7h1v1h-1zM82 8h1v1h-1zM82 9h1v1h-1zM82 10h1v1h-1zM88 10h1v1h-1zM83 11h5v1h-5zM92 5h5v1h-5zM91 6h1v1h-1zM97 6h1v1h-1zM91 7h1v1h-1zM92 8h5v1h-5zM97 9h1v1h-1zM91 10h1v1h-1zM97 10h1v1h-1zM92 11h5v1h-5zM103 5h2v1h-2zM103 6h2v1h-2zM103 10h2v1h-2zM103 11h2v1h-2zM119 5h5v1h-5zM118 6h1v1h-1zM124 6h1v1h-1zM118 7h1v1h-1zM124 7h1v1h-1zM118 8h7v1h-7zM118 9h1v1h-1zM118 10h1v1h-1zM119 11h5v1h-5zM127 5h1v1h-1zM133 5h1v1h-1zM128 6h1v1h-1zM132 6h1v1h-1zM129 7h1v1h-1zM131 7h1v1h-1zM130 8h1v1h-1zM129 9h1v1h-1zM131 9h1v1h-1zM128 10h1v1h-1zM132 10h1v1h-1zM127 11h1v1h-1zM133 11h1v1h-1zM137 5h5v1h-5zM142 6h1v1h-1zM142 7h1v1h-1zM137 8h6v1h-6zM136 9h1v1h-1zM142 9h1v1h-1zM136 10h1v1h-1zM141 10h2v1h-2zM137 11h4v1h-4zM142 11h1v1h-1zM145 5h3v1h-3zM149 5h2v1h-2zM145 6h1v1h-1zM148 6h1v1h-1zM151 6h1v1h-1zM145 7h1v1h-1zM148 7h1v1h-1zM151 7h1v1h-1zM145 8h1v1h-1zM148 8h1v1h-1zM151 8h1v1h-1zM145 9h1v1h-1zM148 9h1v1h-1zM151 9h1v1h-1zM145 10h1v1h-1zM148 10h1v1h-1zM151 10h1v1h-1zM145 11h1v1h-1zM151 11h1v1h-1zM154 5h1v1h-1zM156 5h4v1h-4zM154 6h2v1h-2zM160 6h1v1h-1zM154 7h1v1h-1zM160 7h1v1h-1zM154 8h1v1h-1zM160 8h1v1h-1zM154 9h1v1h-1zM160 9h1v1h-1zM154 10h2v1h-2zM160 10h1v1h-1zM154 11h1v1h-1zM156 11h4v1h-4zM154 12h1v1h-1zM154 13h1v1h-1zM154 14h1v1h-1zM164 2h3v1h-3zM166 3h1v1h-1zM166 4h1v1h-1zM166 5h1v1h-1zM166 6h1v1h-1zM166 7h1v1h-1zM166 8h1v1h-1zM166 9h1v1h-1zM166 10h1v1h-1zM164 11h5v1h-5zM173 5h5v1h-5zM172 6h1v1h-1zM178 6h1v1h-1zM172 7h1v1h-1zM178 7h1v1h-1zM172 8h7v1h-7zM172 9h1v1h-1zM172 10h1v1h-1zM173 11h5v1h-5zM184 10h2v1h-2zM184 11h2v1h-2zM191 2h3v1h-3zM193 3h1v1h-1zM193 4h1v1h-1zM193 5h1v1h-1zM193 6h1v1h-1zM193 7h1v1h-1zM193 8h1v1h-1zM193 9h1v1h-1zM193 10h1v1h-1zM191 11h5v1h-5z"/><path fill="#000" d="M257 1h1v1h-1zM256 2h1v1h-1zM256 3h1v1h-1zM255 4h1v1h-1zM255 5h1v1h-1zM255 6h1v1h-1zM255 7h1v1h-1zM255 8h1v1h-1zM255 9h1v1h-1zM256 10h1v1h-1zM256 11h1v1h-1zM257 12h1v1h-1zM425 2h5v1h-5zM424 3h1v1h-1zM430 3h1v1h-1zM424 4h1v1h-1zM430 4h1v1h-1zM424 5h1v1h-1zM425 6h3v1h-3zM428 7h2v1h-2zM430 8h1v1h-1zM424 9h1v1h-1zM430 9h1v1h-1zM424 10h1v1h-1zM430 10h1v1h-1zM425 11h5v1h-5zM434 5h5v1h-5zM433 6h1v1h-1zM439 6h1v1h-1zM433 7h1v1h-1zM433 8h1v1h-1zM433 9h1v1h-1zM433 10h1v1h-1zM439 10h1v1h-1zM434 11h5v1h-5zM442 5h1v1h-1zM445 5h3v1h-3zM443 6h2v1h-2zM448 6h1v1h-1zM443 7h1v1h-1zM448 7h1v1h-1zM443 8h1v1h-1zM443 9h1v1h-1zM443 10h1v1h-1zM443 11h1v1h-1zM453 2h2v1h-2zM452 5h3v1h-3zM454 6h1v1h-1zM454 7h1v1h-1zM454 8h1v1h-1zM454 9h1v1h-1zM454 10h1v1h-1zM452 11h5v1h-5zM460 5h1v1h-1zM462 5h4v1h-4zM460 6h2v1h-2zM466 6h1v1h-1zM460 7h1v1h-1zM466 7h1v1h-1zM460 8h1v1h-1zM466 8h1v1h-1zM460 9h1v1h-1zM466 9h1v1h-1zM460 10h2v1h-2zM466 10h1v1h-1zM460 11h1v1h-1zM462 11h4v1h-4zM460 12h1v1h-1zM460 13h1v1h-1zM460 14h1v1h-1zM471 3h1v1h-1zM471 4h1v1h-1zM469 5h6v1h-6zM471 6h1v1h-1zM471 7h1v1h-1zM471 8h1v1h-1zM471 9h1v1h-1zM471 10h1v1h-1zM475 10h1v1h-1zM472 11h3v1h-3zM480 2h2v1h-2zM479 5h3v1h-3zM481 6h1v1h-1zM481 7h1v1h-1zM481 8h1v1h-1zM481 9h1v1h-1zM481 10h1v1h-1zM479 11h5v1h-5zM487 5h1v1h-1zM489 5h4v1h-4zM487 6h2v1h-2zM493 6h1v1h-1zM487 7h1v1h-1zM493 7h1v1h-1zM487 8h1v1h-1zM493 8h1v1h-1zM487 9h1v1h-1zM493 9h1v1h-1zM487 10h1v1h-1zM493 10h1v1h-1zM487 11h1v1h-1zM493 11h1v1h-1zM497 5h4v1h-4zM502 5h1v1h-1zM496 6h1v1h-1zM501 6h1v1h-1zM496 7h1v1h-1zM501 7h1v1h-1zM496 8h1v1h-1zM501 8h1v1h-1zM497 9h4v1h-4zM496 10h1v1h-1zM497 11h5v1h-5zM496 12h1v1h-1zM502 12h1v1h-1zM496 13h1v1h-1zM502 13h1v1h-1zM497 14h5v1h-5zM516 1h1v1h-1zM517 2h1v1h-1zM517 3h1v1h-1zM518 4h1v1h-1zM518 5h1v1h-1zM518 6h1v1h-1zM518 7h1v1h-1zM518 8h1v1h-1zM518 9h1v1h-1zM517 10h1v1h-1zM517 11h1v1h-1zM516 12h1v1h-1zM523 7h7v1h-7zM532 7h7v1h-7zM541 7h7v1h-7zM550 7h7v1h-7zM562 2h1v1h-1zM561 3h1v1h-1zM563 3h1v1h-1zM560 4h1v1h-1zM564 4h1v1h-1zM559 5h1v1h-1zM565 5h1v1h-1zM559 6h1v1h-1zM565 6h1v1h-1zM559 7h1v1h-1zM565 7h1v1h-1zM559 8h7v1h-7zM559 9h1v1h-1zM565 9h1v1h-1zM559 10h1v1h-1zM565 10h1v1h-1zM559 11h1v1h-1zM565 11h1v1h-1zM569 2h3v1h-3zM571 3h1v1h-1zM571 4h1v1h-1zM571 5h1v1h-1zM571 6h1v1h-1zM571 7h1v1h-1zM571 8h1v1h-1zM571 9h1v1h-1zM571 10h1v1h-1zM569 11h5v1h-5zM578 2h3v1h-3zM580 3h1v1h-1zM580 4h1v1h-1zM580 5h1v1h-1zM580 6h1v1h-1zM580 7h1v1h-1zM580 8h1v1h-1zM580 9h1v1h-1zM580 10h1v1h-1zM578 11h5v1h-5zM586 7h7v1h-7zM595 7h7v1h-7zM604 7h7v1h-7zM613 7h7v1h-7z"/><path fill="#1e8c1e" d="M307 2h1v1h-1zM313 2h1v1h-1zM307 3h1v1h-1zM313 3h1v1h-1zM308 4h1v1h-1zM312 4h1v1h-1zM309 5h1v1h-1zM311 5h1v1h-1zM310 6h1v1h-1zM310 7h1v1h-1zM309 8h1v1h-1zM311 8h1v1h-1zM308 9h1v1h-1zM312 9h1v1h-1zM307 10h1v1h-1zM313 10h1v1h-1zM307 11h1v1h-1zM313 11h1v1h-1zM317 2h5v1h-5zM316 3h1v1h-1zM322 3h1v1h-1zM316 4h1v1h-1zM322 4h1v1h-1zM316 5h1v1h-1zM317 6h3v1h-3zM320 7h2v1h-2zM322 8h1v1h-1zM316 9h1v1h-1zM322 9h1v1h-1zM316 10h1v1h-1zM322 10h1v1h-1zM317 11h5v1h-5zM328 5h2v1h-2zM328 6h2v1h-2zM328 10h2v1h-2zM328 11h2v1h-2zM335 2h3v1h-3zM337 3h1v1h-1zM337 4h1v1h-1zM337 5h1v1h-1zM337 6h1v1h-1zM337 7h1v1h-1zM337 8h1v1h-1zM337 9h1v1h-1zM337 10h1v1h-1zM335 11h5v1h-5zM344 5h5v1h-5zM343 6h1v1h-1zM349 6h1v1h-1zM343 7h1v1h-1zM349 7h1v1h-1zM343 8h7v1h-7zM343 9h1v1h-1zM343 10h1v1h-1zM344 11h5v1h-5zM353 5h4v1h-4zM358 5h1v1h-1zM352 6h1v1h-1zM357 6h1v1h-1zM352 7h1v1h-1zM357 7h1v1h-1zM352 8h1v1h-1zM357 8h1v1h-1zM353 9h4v1h-4zM352 10h1v1h-1zM353 11h5v1h-5zM352 12h1v1h-1zM358 12h1v1h-1zM352 13h1v1h-1zM358 13h1v1h-1zM353 14h5v1h-5zM362 5h5v1h-5zM361 6h1v1h-1zM367 6h1v1h-1zM361 7h1v1h-1zM367 7h1v1h-1zM361 8h1v1h-1zM367 8h1v1h-1zM361 9h1v1h-1zM367 9h1v1h-1zM361 10h1v1h-1zM367 10h1v1h-1zM362 11h5v1h-5zM379 2h7v1h-7zM379 3h1v1h-1zM379 4h1v1h-1zM379 5h1v1h-1zM379 6h5v1h-5zM379 7h1v1h-1zM379 8h1v1h-1zM379 9h1v1h-1zM379 10h1v1h-1zM379 11h1v1h-1zM389 5h5v1h-5zM388 6h1v1h-1zM394 6h1v1h-1zM388 7h1v1h-1zM394 7h1v1h-1zM388 8h1v1h-1zM394 8h1v1h-1zM388 9h1v1h-1zM394 9h1v1h-1zM388 10h1v1h-1zM394 10h1v1h-1zM389 11h5v1h-5zM397 5h1v1h-1zM399 5h4v1h-4zM397 6h2v1h-2zM403 6h1v1h-1zM397 7h1v1h-1zM403 7h1v1h-1zM397 8h1v1h-1zM403 8h1v1h-1zM397 9h1v1h-1zM403 9h1v1h-1zM397 10h1v1h-1zM403 10h1v1h-1zM397 11h1v1h-1zM403 11h1v1h-1zM408 3h1v1h-1zM408 4h1v1h-1zM406 5h6v1h-6zM408 6h1v1h-1zM408 7h1v1h-1zM408 8h1v1h-1zM408 9h1v1h-1zM408 10h1v1h-1zM412 10h1v1h-1zM409 11h3v1h-3z"/></svg>
<div class="a" style="left:8px;top:507px;width:627px;height:19px;border-top:2px solid #fff;border-left:2px solid #fff;border-right:2px solid #8c8880;border-bottom:2px solid #8c8880"></div>
<svg style="left:10px;top:509px" width="621" height="15" shape-rendering="crispEdges"><path fill="#c02828" d="M1 7h7v1h-7zM10 7h7v1h-7zM19 7h7v1h-7zM28 7h7v1h-7zM37 7h7v1h-7zM289 2h1v1h-1zM289 3h1v1h-1zM289 4h1v1h-1zM289 5h1v1h-1zM289 6h1v1h-1zM289 7h1v1h-1zM289 8h1v1h-1zM289 9h1v1h-1zM289 10h1v1h-1zM289 11h7v1h-7zM298 2h7v1h-7zM298 3h1v1h-1zM298 4h1v1h-1zM298 5h1v1h-1zM298 6h5v1h-5zM298 7h1v1h-1zM298 8h1v1h-1zM298 9h1v1h-1zM298 10h1v1h-1zM298 11h7v1h-7zM308 2h5v1h-5zM307 3h1v1h-1zM313 3h1v1h-1zM307 4h1v1h-1zM307 5h1v1h-1zM307 6h1v1h-1zM307 7h1v1h-1zM311 7h3v1h-3zM307 8h1v1h-1zM313 8h1v1h-1zM307 9h1v1h-1zM313 9h1v1h-1zM307 10h1v1h-1zM313 10h1v1h-1zM308 11h5v1h-5zM317 2h5v1h-5zM316 3h1v1h-1zM322 3h1v1h-1zM316 4h1v1h-1zM322 4h1v1h-1zM316 5h1v1h-1zM322 5h1v1h-1zM316 6h1v1h-1zM322 6h1v1h-1zM316 7h1v1h-1zM322 7h1v1h-1zM316 8h1v1h-1zM322 8h1v1h-1zM316 9h1v1h-1zM322 9h1v1h-1zM316 10h1v1h-1zM322 10h1v1h-1zM317 11h5v1h-5zM326 2h5v1h-5zM325 3h1v1h-1zM331 3h1v1h-1zM325 4h1v1h-1zM325 5h1v1h-1zM325 6h1v1h-1zM325 7h1v1h-1zM329 7h3v1h-3zM325 8h1v1h-1zM331 8h1v1h-1zM325 9h1v1h-1zM331 9h1v1h-1zM325 10h1v1h-1zM331 10h1v1h-1zM326 11h5v1h-5zM335 5h5v1h-5zM334 6h1v1h-1zM340 6h1v1h-1zM334 7h1v1h-1zM340 7h1v1h-1zM334 8h1v1h-1zM340 8h1v1h-1zM334 9h1v1h-1zM340 9h1v1h-1zM334 10h1v1h-1zM340 10h1v1h-1zM335 11h5v1h-5zM344 5h5v1h-5zM349 6h1v1h-1zM349 7h1v1h-1zM344 8h6v1h-6zM343 9h1v1h-1zM349 9h1v1h-1zM343 10h1v1h-1zM348 10h2v1h-2zM344 11h4v1h-4zM349 11h1v1h-1zM353 2h3v1h-3zM355 3h1v1h-1zM355 4h1v1h-1zM355 5h1v1h-1zM355 6h1v1h-1zM355 7h1v1h-1zM355 8h1v1h-1zM355 9h1v1h-1zM355 10h1v1h-1zM353 11h5v1h-5zM362 5h5v1h-5zM361 6h1v1h-1zM367 6h1v1h-1zM361 7h1v1h-1zM362 8h5v1h-5zM367 9h1v1h-1zM361 10h1v1h-1zM367 10h1v1h-1zM362 11h5v1h-5z"/><path fill="#1c1c98" d="M46 2h1v1h-1zM52 2h1v1h-1zM46 3h1v1h-1zM52 3h1v1h-1zM47 4h1v1h-1zM51 4h1v1h-1zM48 5h1v1h-1zM50 5h1v1h-1zM49 6h1v1h-1zM49 7h1v1h-1zM48 8h1v1h-1zM50 8h1v1h-1zM47 9h1v1h-1zM51 9h1v1h-1zM46 10h1v1h-1zM52 10h1v1h-1zM46 11h1v1h-1zM52 11h1v1h-1zM55 2h7v1h-7zM55 3h1v1h-1zM55 4h1v1h-1zM55 5h1v1h-1zM55 6h5v1h-5zM55 7h1v1h-1zM55 8h1v1h-1zM55 9h1v1h-1zM55 10h1v1h-1zM55 11h7v1h-7zM64 5h3v1h-3zM68 5h2v1h-2zM64 6h1v1h-1zM67 6h1v1h-1zM70 6h1v1h-1zM64 7h1v1h-1zM67 7h1v1h-1zM70 7h1v1h-1zM64 8h1v1h-1zM67 8h1v1h-1zM70 8h1v1h-1zM64 9h1v1h-1zM67 9h1v1h-1zM70 9h1v1h-1zM64 10h1v1h-1zM67 10h1v1h-1zM70 10h1v1h-1zM64 11h1v1h-1zM70 11h1v1h-1zM74 5h5v1h-5zM79 6h1v1h-1zM79 7h1v1h-1zM74 8h6v1h-6zM73 9h1v1h-1zM79 9h1v1h-1zM73 10h1v1h-1zM78 10h2v1h-2zM74 11h4v1h-4zM79 11h1v1h-1zM83 5h5v1h-5zM82 6h1v1h-1zM88 6h1v1h-1zM82 7h1v1h-1zM82 8h1v1h-1zM82 9h1v1h-1zM82 10h1v1h-1zM88 10h1v1h-1zM83 11h5v1h-5zM92 5h5v1h-5zM91 6h1v1h-1zM97 6h1v1h-1zM91 7h1v1h-1zM92 8h5v1h-5zM97 9h1v1h-1zM91 10h1v1h-1zM97 10h1v1h-1zM92 11h5v1h-5zM103 5h2v1h-2zM103 6h2v1h-2zM103 10h2v1h-2zM103 11h2v1h-2zM121 4h1v1h-1zM118 5h1v1h-1zM121 5h1v1h-1zM124 5h1v1h-1zM119 6h1v1h-1zM121 6h1v1h-1zM123 6h1v1h-1zM120 7h3v1h-3zM119 8h1v1h-1zM121 8h1v1h-1zM123 8h1v1h-1zM118 9h1v1h-1zM121 9h1v1h-1zM124 9h1v1h-1zM121 10h1v1h-1zM128 2h3v1h-3zM130 3h1v1h-1zM130 4h1v1h-1zM130 5h1v1h-1zM130 6h1v1h-1zM130 7h1v1h-1zM130 8h1v1h-1zM130 9h1v1h-1zM130 10h1v1h-1zM128 11h5v1h-5zM137 5h5v1h-5zM136 6h1v1h-1zM142 6h1v1h-1zM136 7h1v1h-1zM142 7h1v1h-1zM136 8h7v1h-7zM136 9h1v1h-1zM136 10h1v1h-1zM137 11h5v1h-5zM146 5h4v1h-4zM151 5h1v1h-1zM145 6h1v1h-1zM150 6h1v1h-1zM145 7h1v1h-1zM150 7h1v1h-1zM145 8h1v1h-1zM150 8h1v1h-1zM146 9h4v1h-4zM145 10h1v1h-1zM146 11h5v1h-5zM145 12h1v1h-1zM151 12h1v1h-1zM145 13h1v1h-1zM151 13h1v1h-1zM146 14h5v1h-5zM155 5h5v1h-5zM154 6h1v1h-1zM160 6h1v1h-1zM154 7h1v1h-1zM160 7h1v1h-1zM154 8h1v1h-1zM160 8h1v1h-1zM154 9h1v1h-1zM160 9h1v1h-1zM154 10h1v1h-1zM160 10h1v1h-1zM155 11h5v1h-5zM163 7h7v1h-7zM173 5h4v1h-4zM178 5h1v1h-1zM172 6h1v1h-1zM177 6h1v1h-1zM172 7h1v1h-1zM177 7h1v1h-1zM172 8h1v1h-1zM177 8h1v1h-1zM173 9h4v1h-4zM172 10h1v1h-1zM173 11h5v1h-5zM172 12h1v1h-1zM178 12h1v1h-1zM172 13h1v1h-1zM178 13h1v1h-1zM173 14h5v1h-5zM182 5h5v1h-5zM181 6h1v1h-1zM187 6h1v1h-1zM181 7h1v1h-1zM187 7h1v1h-1zM181 8h1v1h-1zM187 8h1v1h-1zM181 9h1v1h-1zM187 9h1v1h-1zM181 10h1v1h-1zM187 10h1v1h-1zM182 11h5v1h-5zM191 5h5v1h-5zM196 6h1v1h-1zM196 7h1v1h-1zM191 8h6v1h-6zM190 9h1v1h-1zM196 9h1v1h-1zM190 10h1v1h-1zM195 10h2v1h-2zM191 11h4v1h-4zM196 11h1v1h-1zM200 2h3v1h-3zM202 3h1v1h-1zM202 4h1v1h-1zM202 5h1v1h-1zM202 6h1v1h-1zM202 7h1v1h-1zM202 8h1v1h-1zM202 9h1v1h-1zM202 10h1v1h-1zM200 11h5v1h-5zM209 5h5v1h-5zM208 6h1v1h-1zM214 6h1v1h-1zM208 7h1v1h-1zM209 8h5v1h-5zM214 9h1v1h-1zM208 10h1v1h-1zM214 10h1v1h-1zM209 11h5v1h-5zM220 4h1v1h-1zM217 5h1v1h-1zM220 5h1v1h-1zM223 5h1v1h-1zM218 6h1v1h-1zM220 6h1v1h-1zM222 6h1v1h-1zM219 7h3v1h-3zM218 8h1v1h-1zM220 8h1v1h-1zM222 8h1v1h-1zM217 9h1v1h-1zM220 9h1v1h-1zM223 9h1v1h-1zM220 10h1v1h-1z"/><path fill="#000" d="M284 1h1v1h-1zM283 2h1v1h-1zM283 3h1v1h-1zM282 4h1v1h-1zM282 5h1v1h-1zM282 6h1v1h-1zM282 7h1v1h-1zM282 8h1v1h-1zM282 9h1v1h-1zM283 10h1v1h-1zM283 11h1v1h-1zM284 12h1v1h-1zM372 1h1v1h-1zM373 2h1v1h-1zM373 3h1v1h-1zM374 4h1v1h-1zM374 5h1v1h-1zM374 6h1v1h-1zM374 7h1v1h-1zM374 8h1v1h-1zM374 9h1v1h-1zM373 10h1v1h-1zM373 11h1v1h-1zM372 12h1v1h-1zM379 7h7v1h-7zM388 7h7v1h-7zM397 7h7v1h-7zM406 7h7v1h-7zM418 2h1v1h-1zM417 3h1v1h-1zM419 3h1v1h-1zM416 4h1v1h-1zM420 4h1v1h-1zM415 5h1v1h-1zM421 5h1v1h-1zM415 6h1v1h-1zM421 6h1v1h-1zM415 7h1v1h-1zM421 7h1v1h-1zM415 8h7v1h-7zM415 9h1v1h-1zM421 9h1v1h-1zM415 10h1v1h-1zM421 10h1v1h-1zM415 11h1v1h-1zM421 11h1v1h-1zM425 2h3v1h-3zM427 3h1v1h-1zM427 4h1v1h-1zM427 5h1v1h-1zM427 6h1v1h-1zM427 7h1v1h-1zM427 8h1v1h-1zM427 9h1v1h-1zM427 10h1v1h-1zM425 11h5v1h-5zM434 2h3v1h-3zM436 3h1v1h-1zM436 4h1v1h-1zM436 5h1v1h-1zM436 6h1v1h-1zM436 7h1v1h-1zM436 8h1v1h-1zM436 9h1v1h-1zM436 10h1v1h-1zM434 11h5v1h-5zM442 7h7v1h-7zM451 7h7v1h-7zM460 7h7v1h-7zM469 7h7v1h-7zM478 7h7v1h-7zM487 7h7v1h-7zM496 7h7v1h-7zM505 7h7v1h-7zM514 7h7v1h-7zM523 7h7v1h-7zM532 7h7v1h-7zM541 7h7v1h-7zM550 7h7v1h-7zM559 7h7v1h-7zM568 7h7v1h-7zM577 7h7v1h-7zM586 7h7v1h-7zM595 7h7v1h-7zM604 7h7v1h-7zM613 7h7v1h-7z"/></svg>
<svg style="left:8px;top:301px" width="90" height="15" shape-rendering="crispEdges"><path fill="#000" d="M22 2h1v1h-1zM21 3h1v1h-1zM23 3h1v1h-1zM20 4h1v1h-1zM24 4h1v1h-1zM19 5h1v1h-1zM25 5h1v1h-1zM19 6h1v1h-1zM25 6h1v1h-1zM19 7h1v1h-1zM25 7h1v1h-1zM19 8h7v1h-7zM19 9h1v1h-1zM25 9h1v1h-1zM19 10h1v1h-1zM25 10h1v1h-1zM19 11h1v1h-1zM25 11h1v1h-1zM40 5h2v1h-2zM40 6h2v1h-2zM40 10h2v1h-2zM40 11h2v1h-2z"/><path fill="#4a88c8" d="M55 2h6v1h-6zM55 3h1v1h-1zM61 3h1v1h-1zM55 4h1v1h-1zM61 4h1v1h-1zM55 5h1v1h-1zM61 5h1v1h-1zM55 6h6v1h-6zM55 7h1v1h-1zM55 8h1v1h-1zM55 9h1v1h-1zM55 10h1v1h-1zM55 11h1v1h-1zM64 5h1v1h-1zM67 5h3v1h-3zM65 6h2v1h-2zM70 6h1v1h-1zM65 7h1v1h-1zM70 7h1v1h-1zM65 8h1v1h-1zM65 9h1v1h-1zM65 10h1v1h-1zM65 11h1v1h-1zM74 5h5v1h-5zM73 6h1v1h-1zM79 6h1v1h-1zM73 7h1v1h-1zM79 7h1v1h-1zM73 8h1v1h-1zM79 8h1v1h-1zM73 9h1v1h-1zM79 9h1v1h-1zM73 10h1v1h-1zM79 10h1v1h-1zM74 11h5v1h-5zM82 5h1v1h-1zM84 5h4v1h-4zM82 6h2v1h-2zM88 6h1v1h-1zM82 7h1v1h-1zM88 7h1v1h-1zM82 8h1v1h-1zM88 8h1v1h-1zM82 9h1v1h-1zM88 9h1v1h-1zM82 10h2v1h-2zM88 10h1v1h-1zM82 11h1v1h-1zM84 11h4v1h-4zM82 12h1v1h-1zM82 13h1v1h-1zM82 14h1v1h-1z"/></svg>
<svg style="left:8px;top:316px" width="90" height="15" shape-rendering="crispEdges"><path fill="#000" d="M19 2h5v1h-5zM19 3h1v1h-1zM24 3h1v1h-1zM19 4h1v1h-1zM25 4h1v1h-1zM19 5h1v1h-1zM24 5h1v1h-1zM19 6h5v1h-5zM19 7h1v1h-1zM24 7h1v1h-1zM19 8h1v1h-1zM25 8h1v1h-1zM19 9h1v1h-1zM25 9h1v1h-1zM19 10h1v1h-1zM24 10h1v1h-1zM19 11h5v1h-5zM40 5h2v1h-2zM40 6h2v1h-2zM40 10h2v1h-2zM40 11h2v1h-2z"/><path fill="#4a88c8" d="M55 2h6v1h-6zM55 3h1v1h-1zM61 3h1v1h-1zM55 4h1v1h-1zM61 4h1v1h-1zM55 5h1v1h-1zM61 5h1v1h-1zM55 6h6v1h-6zM55 7h1v1h-1zM55 8h1v1h-1zM55 9h1v1h-1zM55 10h1v1h-1zM55 11h1v1h-1zM64 5h1v1h-1zM67 5h3v1h-3zM65 6h2v1h-2zM70 6h1v1h-1zM65 7h1v1h-1zM70 7h1v1h-1zM65 8h1v1h-1zM65 9h1v1h-1zM65 10h1v1h-1zM65 11h1v1h-1zM74 5h5v1h-5zM73 6h1v1h-1zM79 6h1v1h-1zM73 7h1v1h-1zM79 7h1v1h-1zM73 8h1v1h-1zM79 8h1v1h-1zM73 9h1v1h-1zM79 9h1v1h-1zM73 10h1v1h-1zM79 10h1v1h-1zM74 11h5v1h-5zM82 5h1v1h-1zM84 5h4v1h-4zM82 6h2v1h-2zM88 6h1v1h-1zM82 7h1v1h-1zM88 7h1v1h-1zM82 8h1v1h-1zM88 8h1v1h-1zM82 9h1v1h-1zM88 9h1v1h-1zM82 10h2v1h-2zM88 10h1v1h-1zM82 11h1v1h-1zM84 11h4v1h-4zM82 12h1v1h-1zM82 13h1v1h-1zM82 14h1v1h-1z"/></svg>
<svg style="left:8px;top:331px" width="100" height="15" shape-rendering="crispEdges"><path fill="#000" d="M19 2h1v1h-1zM25 2h1v1h-1zM19 3h1v1h-1zM25 3h1v1h-1zM19 4h1v1h-1zM25 4h1v1h-1zM19 5h1v1h-1zM25 5h1v1h-1zM19 6h7v1h-7zM19 7h1v1h-1zM25 7h1v1h-1zM19 8h1v1h-1zM25 8h1v1h-1zM19 9h1v1h-1zM25 9h1v1h-1zM19 10h1v1h-1zM25 10h1v1h-1zM19 11h1v1h-1zM25 11h1v1h-1zM40 5h2v1h-2zM40 6h2v1h-2zM40 10h2v1h-2zM40 11h2v1h-2zM58 2h1v1h-1zM57 3h1v1h-1zM59 3h1v1h-1zM56 4h1v1h-1zM60 4h1v1h-1zM55 5h1v1h-1zM61 5h1v1h-1zM55 6h1v1h-1zM61 6h1v1h-1zM55 7h1v1h-1zM61 7h1v1h-1zM55 8h7v1h-7zM55 9h1v1h-1zM61 9h1v1h-1zM55 10h1v1h-1zM61 10h1v1h-1zM55 11h1v1h-1zM61 11h1v1h-1zM76 4h2v1h-2zM76 5h2v1h-2zM75 6h1v1h-1zM78 6h1v1h-1zM75 7h1v1h-1zM78 7h1v1h-1zM74 8h1v1h-1zM79 8h1v1h-1zM74 9h1v1h-1zM79 9h1v1h-1zM73 10h1v1h-1zM80 10h1v1h-1zM92 2h5v1h-5zM92 3h1v1h-1zM97 3h1v1h-1zM92 4h1v1h-1zM98 4h1v1h-1zM92 5h1v1h-1zM97 5h1v1h-1zM92 6h5v1h-5zM92 7h1v1h-1zM97 7h1v1h-1zM92 8h1v1h-1zM98 8h1v1h-1zM92 9h1v1h-1zM98 9h1v1h-1zM92 10h1v1h-1zM97 10h1v1h-1zM92 11h5v1h-5z"/></svg>
<svg style="left:8px;top:346px" width="109" height="15" shape-rendering="crispEdges"><path fill="#000" d="M20 2h5v1h-5zM19 3h1v1h-1zM25 3h1v1h-1zM19 4h1v1h-1zM25 4h1v1h-1zM25 5h1v1h-1zM24 6h1v1h-1zM23 7h1v1h-1zM22 8h1v1h-1zM22 9h1v1h-1zM22 11h1v1h-1zM29 2h5v1h-5zM28 3h1v1h-1zM34 3h1v1h-1zM28 4h1v1h-1zM34 4h1v1h-1zM33 5h1v1h-1zM32 6h1v1h-1zM31 7h1v1h-1zM30 8h1v1h-1zM29 9h1v1h-1zM28 10h1v1h-1zM28 11h7v1h-7zM49 5h2v1h-2zM49 6h2v1h-2zM49 10h2v1h-2zM49 11h2v1h-2zM64 2h5v1h-5zM64 3h1v1h-1zM69 3h1v1h-1zM64 4h1v1h-1zM70 4h1v1h-1zM64 5h1v1h-1zM69 5h1v1h-1zM64 6h5v1h-5zM64 7h1v1h-1zM69 7h1v1h-1zM64 8h1v1h-1zM70 8h1v1h-1zM64 9h1v1h-1zM70 9h1v1h-1zM64 10h1v1h-1zM69 10h1v1h-1zM64 11h5v1h-5zM85 4h2v1h-2zM85 5h2v1h-2zM84 6h1v1h-1zM87 6h1v1h-1zM84 7h1v1h-1zM87 7h1v1h-1zM83 8h1v1h-1zM88 8h1v1h-1zM83 9h1v1h-1zM88 9h1v1h-1zM82 10h1v1h-1zM89 10h1v1h-1zM104 2h1v1h-1zM103 3h1v1h-1zM105 3h1v1h-1zM102 4h1v1h-1zM106 4h1v1h-1zM101 5h1v1h-1zM107 5h1v1h-1zM101 6h1v1h-1zM107 6h1v1h-1zM101 7h1v1h-1zM107 7h1v1h-1zM101 8h7v1h-7zM101 9h1v1h-1zM107 9h1v1h-1zM101 10h1v1h-1zM107 10h1v1h-1zM101 11h1v1h-1zM107 11h1v1h-1z"/></svg>
</body></html>
